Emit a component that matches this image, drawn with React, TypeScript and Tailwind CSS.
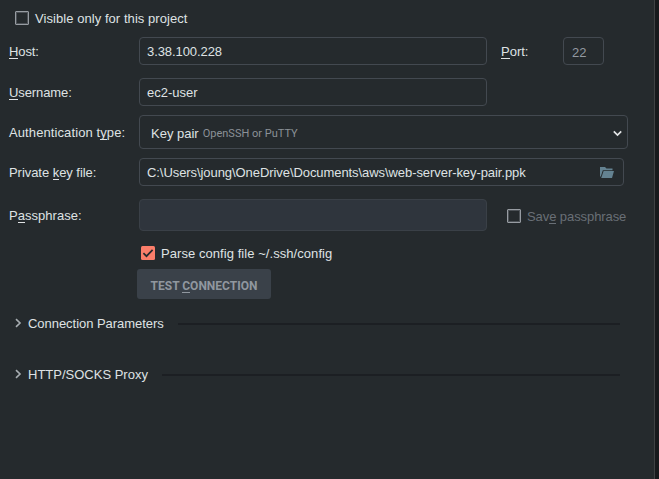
import type { ReactNode } from "react";

function Label({ children, className }: { children: ReactNode; className: string }) {
  return <div className={`w-[130px] shrink-0 pt-px ${className}`}>{children}</div>;
}

function U({ children }: { children: ReactNode }) {
  return <span className="inline-block h-[14px] border-b border-current leading-[14px]">{children}</span>;
}

function EmptyCheckbox({ className = "" }: { className?: string }) {
  return (
    <div className={`h-[14px] w-[14px] rounded-[1px] border border-[#979ca2] shadow-[inset_0_0_0_1px_#4c5156] ${className}`} />
  );
}

function Section({ title, className, titleClass }: { title: string; className: string; titleClass: string }) {
  return (
    <div className={`flex h-4 items-center pl-[15px] ${className}`}>
      <svg className="mr-[6px] mb-[3px] h-[10px] w-[7px]" viewBox="0 0 7 10" fill="none" stroke="#a7adb1" strokeWidth="1.6">
        <path d="M1 1.2 5 5 1 8.8" />
      </svg>
      <span className={titleClass}>{title}</span>
      <div className="mr-[34px] h-[2px] flex-1 bg-[#1c1f23]" />
    </div>
  );
}

export default function App() {
  return (
    <div className="flex h-[479px] w-[659px] overflow-hidden bg-[#17191c] font-['Liberation_Sans',Arial,sans-serif] text-[13px] leading-4 whitespace-nowrap text-[#dfe2e4]">
      <div className="w-[655px] border-r border-[#3f4244] bg-[#252a2d]">
        <div className="mt-[10px] flex h-4 items-center pl-[15px]">
          <EmptyCheckbox />
          <span className="ml-[6px] pt-px tracking-[0.06px]">Visible only for this project</span>
        </div>

        <div className="mt-[11px] flex h-7 items-center pl-[9px]">
          <Label className="tracking-[-0.1px]"><U>H</U>ost:</Label>
          <div className="flex h-7 w-[348px] items-center rounded-[4px] border border-[#434950] px-[7px] pt-px tracking-[-0.08px]">3.38.100.228</div>
          <div className="ml-[14px] w-[62px] pt-px"><U>P</U>ort:</div>
          <div className="flex h-7 w-[41px] items-center rounded-[4px] border border-[#434950] px-2 pt-[3px] text-[#9299a1]">22</div>
        </div>

        <div className="mt-[13px] flex h-7 items-center pl-[9px]">
          <Label className="tracking-[-0.1px]"><U>U</U>sername:</Label>
          <div className="flex h-7 w-[348px] items-center rounded-[4px] border border-[#434950] px-[7px] pt-px">ec2-user</div>
        </div>

        <div className="mt-[9px] flex h-[34px] items-center pl-[9px]">
          <Label className="tracking-[0.1px]">Authentication t<U>y</U>pe:</Label>
          <div className="flex h-[34px] w-[489px] items-center rounded-[4px] border border-[#434950] pt-[2px] pr-[5px] pl-[11px]">
            <span className="pt-px">Key pair</span>
            <span className="ml-1 pt-[2px] font-[Roboto] text-[11px] text-[#8b9197]">OpenSSH or PuTTY</span>
            <svg className="ml-auto h-[7px] w-[9px]" viewBox="0 0 9 7" fill="none" stroke="#e3e5e7" strokeWidth="1.7">
              <path d="M.8 1.3 4.5 5 8.2 1.3" />
            </svg>
          </div>
        </div>

        <div className="mt-[9px] flex h-7 items-center pl-[9px]">
          <Label className="tracking-[-0.05px]">Private <U>k</U>ey file:</Label>
          <div className="flex h-7 w-[485px] items-center rounded-[4px] border border-[#434950] pr-[9px] pl-[7px]">
            <span className="pt-px tracking-[-0.07px]">C:\Users\joung\OneDrive\Documents\aws\web-server-key-pair.ppk</span>
            <svg className="ml-auto h-[11px] w-[14px]" viewBox="0 0 14 11" fill="#648291">
              <path d="M0 0h5l1.5 1.5H12.5v1.7H2.8L.8 9.5H0z" />
              <path d="M3.6 4H14L12 11H1.2z" />
            </svg>
          </div>
        </div>

        <div className="mt-[13px] flex h-8 items-center pl-[9px]">
          <Label className="tracking-[0.03px]">P<U>a</U>ssphrase:</Label>
          <div className="h-8 w-[348px] rounded-[4px] border border-[#3a4047] bg-[#2f353d]" />
          <EmptyCheckbox className="mt-[2px] ml-5" />
          <span className="mt-[3px] ml-[6px] tracking-[-0.08px] text-[#696f76]">Sav<U>e</U> passphrase</span>
        </div>

        <div className="mt-[14px] flex h-4 items-center pl-[141px]">
          <svg className="h-[14px] w-[14px]" viewBox="0 0 14 14">
            <rect width="14" height="14" rx="1.5" fill="#fb7e6a" />
            <path d="M2.4 7.2 5.5 10.2 11.6 3.8" fill="none" stroke="#25292d" strokeWidth="1.7" />
          </svg>
          <span className="ml-[6px] pt-px tracking-[0.06px]">Parse config file ~/.ssh/config</span>
        </div>

        <button className="mt-2 ml-[137px] flex h-[30px] w-[134px] items-center justify-center rounded-[3px] bg-[#3a4149] pt-[3px] font-[Roboto] text-[12px] font-bold text-[#90979f]">
          <span>TEST <U>C</U>ONNECTION</span>
        </button>

        <Section title="Connection Parameters" className="mt-[17px]" titleClass="w-[150px] tracking-[-0.04px]" />
        <Section title="HTTP/SOCKS Proxy" className="mt-[35px]" titleClass="w-[134px]" />
      </div>
    </div>
  );
}
